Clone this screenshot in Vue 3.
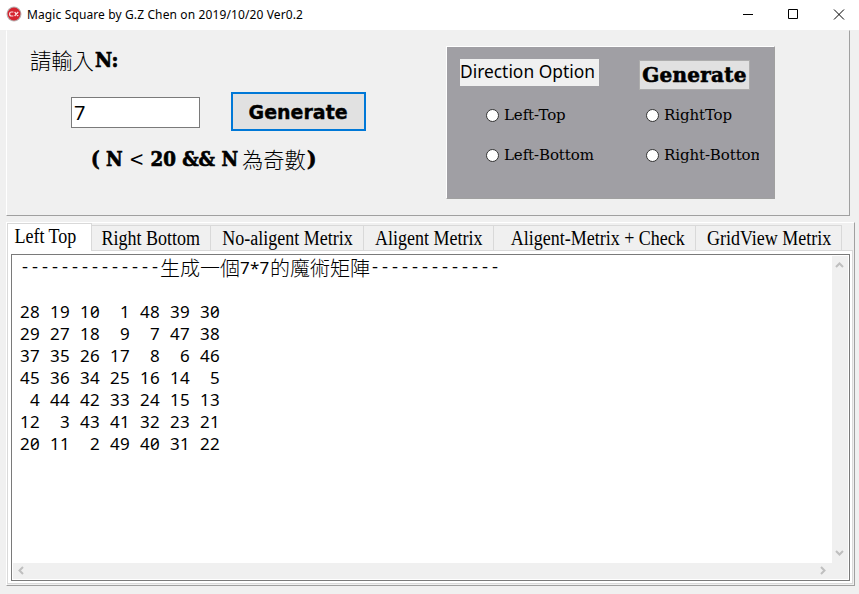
<script setup>
import { ref } from 'vue'

const order = ref('7')
const direction = ref('')
const active = ref(0)
const tabs = [
  { label: 'Left Top', cls: 'w-a' },
  { label: 'Right Bottom', cls: 'w-b' },
  { label: 'No-aligent Metrix', cls: 'w-c' },
  { label: 'Aligent Metrix', cls: 'w-d' },
  { label: 'Aligent-Metrix + Check', cls: 'w-e' },
  { label: 'GridView Metrix', cls: 'w-f' },
]
const options = ['Left-Top', 'RightTop', 'Left-Bottom', 'Right-Bottom']
const matrix = [
  [28, 19, 10, 1, 48, 39, 30],
  [29, 27, 18, 9, 7, 47, 38],
  [37, 35, 26, 17, 8, 6, 46],
  [45, 36, 34, 25, 16, 14, 5],
  [4, 44, 42, 33, 24, 15, 13],
  [12, 3, 43, 41, 32, 23, 21],
  [20, 11, 2, 49, 40, 31, 22],
]
</script>

<template>
  <div class="window">
    <header class="titlebar">
      <svg class="logo" width="16" height="16" viewBox="0 0 16 16">
        <circle cx="8" cy="8" r="7.5" fill="#b9b4b4" />
        <circle cx="8" cy="8" r="6.4" fill="#d5232f" />
        <path d="M7.4 6H5.4Q3.6 6 3.6 8T5.4 10H7.4M8.6 6L12.2 10M12.2 6L8.6 10" fill="none" stroke="#fbdfe0" stroke-width="1.2" />
      </svg>
      <h1 class="title">Magic Square by G.Z Chen on 2019/10/20 Ver0.2</h1>
      <svg class="controls" width="120" height="30" viewBox="0 0 120 30" fill="none" stroke="#000">
        <path d="M4 14.5h10M49.5 9.5h9v9h-9zM95 9.5l10 10M105 9.5l-10 10" />
      </svg>
    </header>

    <section class="top">
      <div class="entry">
        <div class="prompt"><span class="cjk">請輸入</span><b class="heavy">N:</b></div>
        <div class="row">
          <input v-model="order" class="number" />
          <button class="primary"><span>Generate</span></button>
        </div>
        <div class="hint"><b class="heavy cond">( N <i class="lt">&lt;</i> 20 &amp;&amp; N</b><span class="cjk">為奇數</span><b class="heavy">)</b></div>
      </div>
      <div class="direction">
        <div class="heads">
          <div class="caption"><span>Direction Option</span></div>
          <button class="secondary"><span>Generate</span></button>
        </div>
        <div class="options">
          <label v-for="o in options" :key="o" class="option">
            <input v-model="direction" type="radio" :value="o" />
            <span>{{ o }}</span>
          </label>
        </div>
      </div>
    </section>

    <section class="bottom">
      <nav class="tabs">
        <button
          v-for="(t, i) in tabs"
          :key="t.label"
          class="tab"
          :class="[t.cls, { active: active === i }]"
          @click="active = i"
        ><span>{{ t.label }}</span></button>
      </nav>
      <div class="page">
        <div class="textbox">
          <div class="content">
            <div class="heading"><span class="dash">--------------</span><span class="cjk">生成一個</span><span class="num">7*7</span><span class="cjk">的魔術矩陣</span><span class="dash">-------------</span></div>
            <div class="matrix">
              <div v-for="(r, i) in matrix" :key="i" class="mrow">
                <span v-for="n in r" :key="n">{{ n }}</span>
              </div>
            </div>
          </div>
          <div class="vbar">
            <svg width="9" height="6" viewBox="0 0 9 6"><path d="M1 5l3.5-3.5L8 5" /></svg>
            <svg width="9" height="6" viewBox="0 0 9 6"><path d="M1 1l3.5 3.5L8 1" /></svg>
          </div>
          <div class="hbar">
            <svg width="6" height="9" viewBox="0 0 6 9"><path d="M5 1L1.5 4.5 5 8" /></svg>
            <svg width="6" height="9" viewBox="0 0 6 9"><path d="M1 1l3.5 3.5L1 8" /></svg>
          </div>
        </div>
      </div>
    </section>
  </div>
</template>

<style>
body {
  background: #f0f0f0;
  overflow: hidden;
}
</style>

<style scoped>
* {
  box-sizing: border-box;
}
.window {
  width: 859px;
  height: 594px;
  background: #f0f0f0;
  color: #000;
  font-family: "Noto Sans", "Noto Sans CJK TC", sans-serif;
  white-space: nowrap;
}
button {
  margin: 0;
  padding: 0;
  color: #000;
}
.titlebar {
  height: 30px;
  background: #fff;
  display: flex;
}
.logo {
  margin: 6px 5px 0 6px;
}
.title {
  margin: 0;
  font-size: 12px;
  line-height: 30px;
  font-weight: 400;
  letter-spacing: 0.12px;
}
.controls {
  margin-left: auto;
}
.cjk {
  font-family: "Noto Sans CJK TC", sans-serif;
  font-weight: 300;
}
.heavy {
  display: inline-block;
  font-family: "DejaVu Serif", serif;
  font-weight: 700;
  font-size: 20px;
  transform-origin: left;
  -webkit-text-stroke: 0.7px #000;
}
.lt {
  font-style: normal;
  font-weight: 400;
  -webkit-text-stroke: 0;
}
.top {
  margin-left: 6px;
  width: 844px;
  height: 186px;
  border: 1px solid #a0a0a0;
  border-left-color: #fff;
  border-top-color: #f0f0f0;
  display: flex;
}
.entry {
  width: 439px;
  padding: 14px 0 0 24px;
}
.prompt,
.hint {
  height: 30px;
  line-height: 30px;
  display: flex;
}
.prompt .cjk,
.hint .cjk {
  font-size: 21.3px;
  position: relative;
  left: -1px;
}
.prompt .heavy {
  transform: scaleX(0.94);
}
.row {
  display: flex;
  padding: 17px 0 0 40px;
}
.number {
  width: 129px;
  height: 31px;
  margin: 5px 31px 0 0;
  padding: 0 2px;
  border: 1px solid #7a7a7a;
  background: #fff;
  font: 20px "Noto Sans", sans-serif;
}
.primary {
  width: 135px;
  height: 39px;
  border: 2px solid #0078d7;
  background: #e1e1e1;
  font: 700 20px "DejaVu Sans", sans-serif;
  -webkit-text-stroke: 0.4px #000;
}
.primary span {
  display: inline-block;
  transform: scaleX(0.95);
}
.hint {
  margin-top: 13px;
  padding-left: 60px;
}
.cond {
  width: 152px;
  transform: scaleX(0.91);
}
.direction {
  width: 329px;
  height: 153px;
  margin-top: 15px;
  background: #a09fa4;
  border: 1px solid #a0a0a0;
  border-top-color: #fff;
  border-left-color: #fff;
}
.heads {
  display: flex;
  height: 58px;
  padding: 12px 0 0 13px;
}
.caption {
  width: 139px;
  height: 27px;
  background: #f0f0f0;
  font-size: 18px;
  line-height: 25px;
}
.caption span {
  display: inline-block;
  transform: scaleX(0.965);
  transform-origin: left;
}
.secondary {
  width: 111px;
  height: 30px;
  margin: 1px 0 0 40px;
  border: 1px solid #adadad;
  background: #e1e1e1;
  font: 700 20px/28px "DejaVu Serif", serif;
  letter-spacing: 0.25px;
  -webkit-text-stroke: 0.6px #000;
}
.options {
  display: grid;
  grid-template-columns: 160px 113px;
  grid-auto-rows: 20px;
  row-gap: 20px;
  padding-left: 39px;
}
.option {
  display: flex;
  align-items: center;
  overflow: hidden;
  font: 15px/20px "DejaVu Serif", serif;
  letter-spacing: -0.1px;
}
.option input {
  appearance: none;
  flex: none;
  width: 13px;
  height: 13px;
  margin: 0 5px 0 0;
  border: 1px solid #333;
  border-radius: 50%;
  background: #fff;
}
.bottom {
  margin: 6px 0 0 6px;
  width: 849px;
  height: 364px;
  border: 1px solid #a0a0a0;
  border-top-color: #fff;
  border-left-color: #fff;
}
.tabs {
  display: flex;
  align-items: flex-end;
  height: 27px;
}
.tab {
  height: 25px;
  border: 1px solid #d9d9d9;
  border-left: 0;
  border-bottom: 0;
  background: #f0f0f0;
  font: 20px/25px "Liberation Serif", serif;
  display: flex;
  justify-content: center;
}
.tab span {
  transform: scaleX(0.9);
}
.tab.active {
  height: 28px;
  margin-bottom: -1px;
  background: #fff;
  border-left: 1px solid #d9d9d9;
  padding-right: 8px;
  position: relative;
}
.w-a { width: 85px; }
.w-b { width: 119px; }
.w-c { width: 153px; }
.w-d { width: 130px; }
.w-e { width: 202px; padding-left: 6px; }
.w-f { width: 146px; padding-left: 2px; }
.page {
  width: 846px;
  height: 334px;
  padding: 3px;
  border: 1px solid #d9d9d9;
  background: #fff;
}
.textbox {
  width: 839px;
  height: 327px;
  border: 1px solid #7a7a7a;
  padding: 1px;
  display: grid;
  grid-template-columns: 819px 16px;
  grid-template-rows: 307px 16px;
  background: #fff;
}
.content {
  padding: 1px 0 0 7px;
}
.heading {
  display: flex;
  height: 44px;
  line-height: 22px;
  font-size: 20px;
}
.dash {
  font-family: "Liberation Mono", monospace;
  font-size: 16.66px;
}
.num,
.matrix {
  font-family: "Noto Sans", sans-serif;
  font-size: 17px;
  font-feature-settings: "zero";
  letter-spacing: 0.28px;
}
.num {
  width: 30px;
}
.mrow {
  display: flex;
  gap: 10px;
  height: 22px;
  line-height: 22px;
}
.mrow span {
  width: 20px;
  text-align: right;
}
.vbar,
.hbar {
  background: #f0f0f0;
  display: flex;
  align-items: center;
  justify-content: space-between;
}
.vbar {
  flex-direction: column;
  padding: 6px 2px 7px 0;
}
.hbar {
  grid-column: 1 / 3;
  padding: 0 22px 2px 5px;
}
.vbar path,
.hbar path {
  fill: none;
  stroke: #bfbfbf;
  stroke-width: 2;
}
</style>
